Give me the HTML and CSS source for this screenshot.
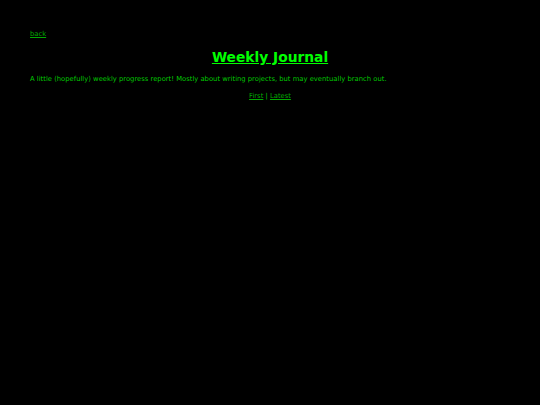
FILE: index.html
```html
<!DOCTYPE html>
<html>
<head>
<meta charset="utf-8">
<title>Weekly Journal</title>
<link rel="stylesheet" href="styles.css">
</head>
<body>
<div class="page">
  <a class="back" href="#">back</a>
  <h1 class="title"><a href="#">Weekly Journal</a></h1>
  <p class="desc">A little (hopefully) weekly progress report! Mostly about writing projects, but may eventually branch out.</p>
  <p class="nav"><a href="#">First</a> | <a href="#">Latest</a></p>
</div>
</body>
</html>
```
FILE: styles.css
```css
html, body {
  margin: 0;
  padding: 0;
  background: #000;
}
body {
  font-family: "DejaVu Sans", Verdana, sans-serif;
  font-size: 6.8px;
  color: #00c800;
}
.page {
  padding: 30px 30px;
}
a {
  color: #00a800;
}
.back {
  display: block;
  line-height: 8px;
}
.title {
  margin: 10px 0 0 0;
  text-align: center;
  font-size: 13.8px;
  line-height: 18px;
}
.title a {
  color: #00ff00;
}
.desc {
  margin: 9px 0 0 0;
  line-height: 8px;
}
.nav {
  margin: 9px 0 0 0;
  text-align: center;
  line-height: 8px;
}
```
